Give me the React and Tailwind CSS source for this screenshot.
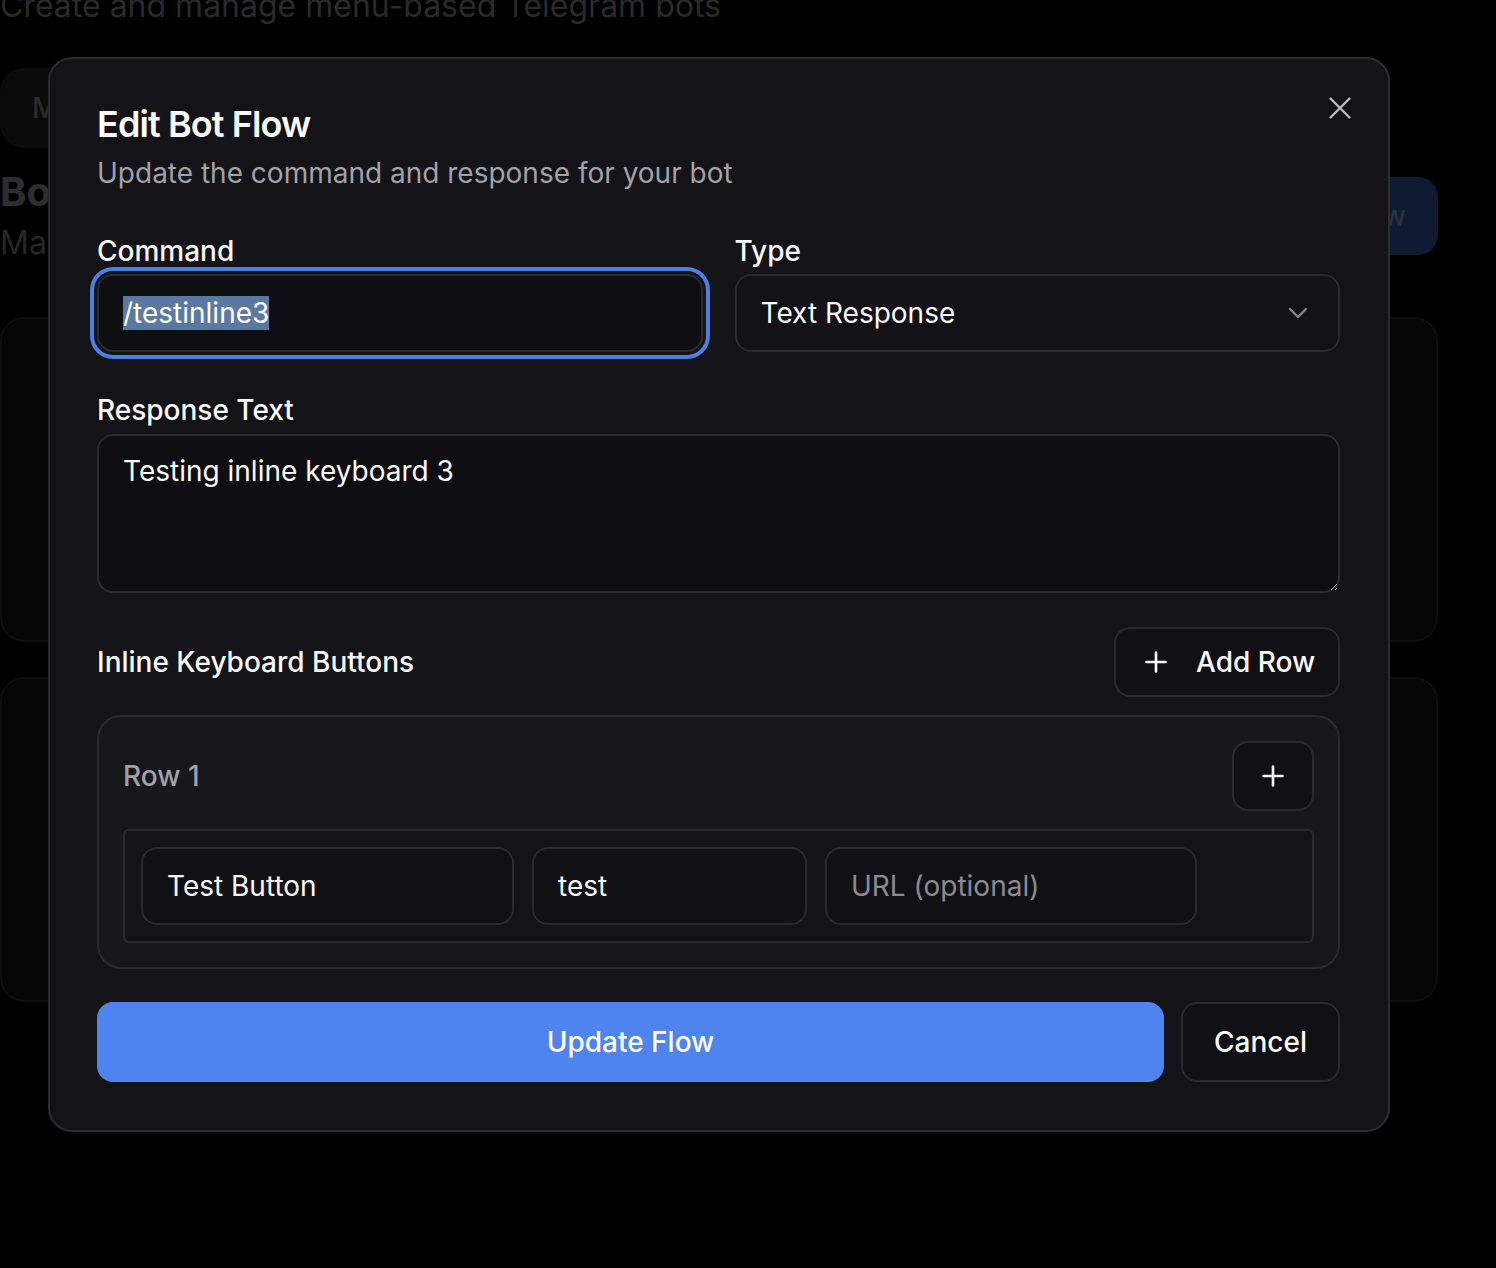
import React from "react";

function PlusIcon({ size = 22, stroke = 2.6 }) {
  return (
    <svg width={size} height={size} viewBox="0 0 22 22" fill="none" stroke="currentColor" strokeWidth={stroke} strokeLinecap="round">
      <path d="M11 1.5v19M1.5 11h19" />
    </svg>
  );
}

export default function App() {
  return (
    <div className="relative w-[1496px] h-[1268px] overflow-hidden bg-black" style={{ fontFamily: "Inter, 'Noto Sans', sans-serif" }}>
      {/* dimmed background page */}
      <div className="flex flex-col w-[1438px]">
        <div className="mt-[-14px] text-[32px] leading-[40px] text-[#2a2a2c]">Create and manage menu-based Telegram bots</div>
        <div className="mt-[42px] h-[80px] w-[200px] rounded-[24px] bg-[#0b0b0c] flex items-center pl-[32px] text-[28px] font-medium text-[#2a2a2c]">
          <span className="w-[16px] overflow-hidden whitespace-nowrap">M</span>
        </div>
        <div className="mt-[20px] flex items-start justify-between">
          <div className="flex flex-col w-[48px] overflow-hidden whitespace-nowrap">
            <div className="text-[40px] leading-[48px] font-bold text-[#2e2e30]">Bots</div>
            <div className="mt-[7px] text-[32px] leading-[40px] text-[#262628]">Manage</div>
          </div>
          <div className="mt-[9px] h-[78px] w-[200px] rounded-[20px] bg-[#0f1b33] flex items-center justify-end pr-[32px] text-[28px] font-medium text-[#2c3140]">
            <span className="w-[22px] overflow-hidden whitespace-nowrap flex justify-end">w</span>
          </div>
        </div>
        <div className="mt-[54px] h-[325px] rounded-[24px] border-2 border-[#0e0e0f] bg-[#050505]" />
        <div className="mt-[35px] h-[325px] rounded-[24px] border-2 border-[#0e0e0f] bg-[#050505]" />
      </div>

      {/* modal */}
      <div className="absolute left-[48px] top-[57px] w-[1342px] rounded-[24px] border-2 border-[#2c2c32] bg-[#131318] pl-[47px] pr-[48px] pt-[47px] pb-[48px] text-[#fafafa]">
        <button className="absolute right-[37px] top-[38px] text-[#b8b8be]">
          <svg width="22" height="22" viewBox="0 0 22 22" fill="none" stroke="currentColor" strokeWidth="2.4" strokeLinecap="round">
            <path d="M1.5 1.5l19 19M20.5 1.5l-19 19" />
          </svg>
        </button>

        <div className="text-[36px] leading-[36px] font-semibold tracking-tight">Edit Bot Flow</div>
        <div className="mt-[11px] text-[28px] leading-[40px] text-[#a1a1aa]">Update the command and response for your bot</div>

        <div className="mt-[38px] grid grid-cols-2 gap-8">
          <div className="flex flex-col">
            <div className="text-[28px] leading-[40px] font-medium mb-[3px]">Command</div>
            <div className="h-[78px] rounded-[16px] border-2 border-[#2a2a30] bg-[#0f0f13] px-6 flex items-center text-[28px] ring-4 ring-[#4a7fe6] ring-offset-[3px] ring-offset-[#131318]">
              <span className="bg-[#5a79a1] leading-[34px] text-white">/testinline3</span>
            </div>
          </div>
          <div className="flex flex-col">
            <div className="text-[28px] leading-[40px] font-medium mb-[3px]">Type</div>
            <div className="h-[78px] rounded-[16px] border-2 border-[#2a2a30] bg-[#121217] pl-6 pr-[30px] flex items-center justify-between text-[28px]">
              <span>Text Response</span>
              <svg width="20" height="12" viewBox="0 0 20 12" fill="none" stroke="#85858c" strokeWidth="2.4" strokeLinecap="round" strokeLinejoin="round">
                <path d="M2 2l8 8 8-8" />
              </svg>
            </div>
          </div>
        </div>

        <div className="mt-[38px] text-[28px] leading-[40px] font-medium mb-1">Response Text</div>
        <textarea
          readOnly
          defaultValue="Testing inline keyboard 3"
          className="block w-full h-[159px] rounded-[16px] border-2 border-[#2a2a30] bg-[#0f0f13] px-6 pt-[18px] text-[28px] leading-[34px] text-[#fafafa] outline-none"
          style={{ fontFamily: "Inter, 'Noto Sans', sans-serif" }}
        />

        <div className="mt-[34px] flex items-center justify-between">
          <div className="text-[28px] font-medium">Inline Keyboard Buttons</div>
          <button className="h-[70px] w-[226px] rounded-[16px] border-2 border-[#2a2a30] bg-[#111115] flex items-center pl-[29px] text-[28px] font-medium text-[#fafafa]">
            <PlusIcon size={22} />
            <span className="ml-[29px]">Add Row</span>
          </button>
        </div>

        <div className="mt-[18px] rounded-[24px] border-2 border-[#2a2a30] bg-[#18181c] p-6">
          <div className="flex items-center justify-between">
            <div className="text-[28px] font-medium text-[#a1a1aa]">Row 1</div>
            <button className="h-[70px] w-[82px] rounded-[16px] border-2 border-[#2a2a30] bg-[#111115] flex items-center justify-center text-[#fafafa]">
              <PlusIcon size={22} />
            </button>
          </div>
          <div className="mt-[18px] rounded-[6px] border-2 border-[#2a2a30] bg-[#131318] p-4 flex gap-[18px]">
            <div className="h-[78px] w-[373px] rounded-[16px] border-2 border-[#2a2a30] bg-[#111115] px-6 flex items-center text-[28px]">Test Button</div>
            <div className="h-[78px] w-[275px] rounded-[16px] border-2 border-[#2a2a30] bg-[#111115] px-6 flex items-center text-[28px]">test</div>
            <div className="h-[78px] w-[372px] rounded-[16px] border-2 border-[#2a2a30] bg-[#111115] px-6 flex items-center text-[28px] text-[#8b8b93]">URL (optional)</div>
          </div>
        </div>

        <div className="mt-[33px] flex gap-[17px]">
          <button className="flex-1 h-[80px] rounded-[16px] bg-[#4f83ee] text-[28px] font-medium text-white">Update Flow</button>
          <button className="w-[159px] h-[80px] rounded-[16px] border-2 border-[#2a2a30] bg-[#111115] text-[28px] font-medium text-[#fafafa]">Cancel</button>
        </div>
      </div>
    </div>
  );
}
